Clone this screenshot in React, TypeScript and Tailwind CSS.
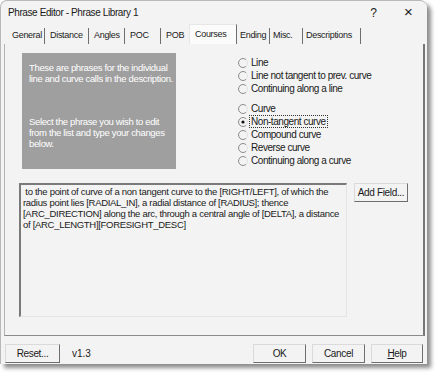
import React from "react";

const font = { fontFamily: '"Liberation Sans", Arial, sans-serif' };

function Radio({ label, checked, focus }: { label: string; checked?: boolean; focus?: boolean }) {
  return (
    <div className="flex items-center h-[13px]">
      <svg width="10" height="10" viewBox="0 0 10 10" className="shrink-0">
        <path d="M8.2 1.8 A4.5 4.5 0 1 0 8.2 8.2" fill="none" stroke="#8a8a8a" strokeWidth="1" />
        <path d="M8.2 8.2 A4.5 4.5 0 0 0 8.2 1.8" fill="none" stroke="#e2e2e2" strokeWidth="1" />
        {checked && <circle cx="5" cy="5" r="1.6" fill="#111" />}
      </svg>
      <span
        className={
          "ml-[2px] px-[1px] leading-[11px] tracking-[-0.45px] " +
          (focus ? "outline outline-1 outline-dotted outline-[#333]" : "")
        }
      >
        {label}
      </span>
    </div>
  );
}

function Btn({ children, w }: { children: React.ReactNode; w: string }) {
  return (
    <div
      className={
        "h-[19px] flex items-center justify-center tracking-[-0.35px] border border-t-[#dadada] border-l-[#dadada] border-r-[#6e6e6e] border-b-[#6e6e6e] bg-[#f3f3f3] " +
        w
      }
    >
      {children}
    </div>
  );
}

const tabs = [
  { t: "General", w: "w-[38px]", sep: true },
  { t: "Distance", w: "w-[44px]", sep: true },
  { t: "Angles", w: "w-[36px]", sep: true },
  { t: "POC", w: "w-[36px]", sep: true },
  { t: "POB", w: "w-[28px]", sep: false },
];
const tabs2 = [
  { t: "Ending", w: "w-[33px]" },
  { t: "Misc.", w: "w-[33px]" },
  { t: "Descriptions", w: "w-[58px]" },
];

export default function App() {
  return (
    <div className="w-[440px] h-[380px] bg-white text-[#1a1a1a] text-[10px]" style={font}>
      <div className="w-[427px] h-[364px] bg-[#f3f3f3] rounded-t-[7px] border-l border-t border-[#b8b8b8] shadow-[4px_4px_4px_rgba(0,0,0,0.45)] flex flex-col">
        {/* title bar */}
        <div className="h-[23px] flex items-center pl-[7px] shrink-0">
          <span className="text-[10px] tracking-[-0.4px] text-[#1a1a1a]">
            Phrase Editor - Phrase Library 1
          </span>
          <div className="ml-auto flex pr-[1px]">
            <span className="w-[35px] text-center text-[12px]">?</span>
            <span className="w-[35px] text-center text-[15px] leading-[15px] font-light">×</span>
          </div>
        </div>
        {/* tabs */}
        <div className="h-[20px] flex items-end pl-[6px] shrink-0 text-[9px] tracking-[-0.3px]">
          {tabs.map((t) => (
            <div key={t.t} className={"h-[16px] flex items-center pl-[5px] " + t.w + (t.sep ? " border-r border-[#6e6e6e]" : "")}>
              {t.t}
            </div>
          ))}
          <div className="h-[20px] w-[48px] flex items-center pl-[5px] pt-[1px] bg-[#fbfbfb] border-t border-l border-[#e6e6e6] border-r border-r-[#6e6e6e]">
            Courses
          </div>
          {tabs2.map((t) => (
            <div key={t.t} className={"h-[16px] flex items-center pl-[3px] border-r border-[#6e6e6e] " + t.w}>
              {t.t}
            </div>
          ))}
        </div>
        {/* panel */}
        <div className="ml-[3px] w-[421px] h-[292px] border-l border-[#b4b4b4] border-r-2 border-r-[#777] border-b border-b-[#8a8a8a] shrink-0 flex flex-col">
          <div className="flex pl-[17px] pt-[9px]">
            <div className="w-[154px] h-[116px] bg-[#9f9f9f] text-white text-[9.5px] px-[7px] pt-[9px] leading-[11px] tracking-[-0.35px] whitespace-nowrap">
              <div>These are phrases for the individual</div>
              <div>line and curve calls in the description.</div>
              <div className="mt-[32px]">Select the phrase you wish to edit</div>
              <div>from the list and type your changes</div>
              <div>below.</div>
            </div>
            <div className="ml-[62px] pt-[3px] flex flex-col">
              <Radio label="Line" />
              <Radio label="Line not tangent to prev. curve" />
              <Radio label="Continuing along a line" />
              <div className="h-[7px]" />
              <Radio label="Curve" />
              <Radio label="Non-tangent curve" checked focus />
              <Radio label="Compound curve" />
              <Radio label="Reverse curve" />
              <Radio label="Continuing along a curve" />
            </div>
          </div>
          <div className="flex pl-[14px] mt-[14px]">
            <div className="w-[328px] h-[134px] border-t-2 border-l-2 border-t-[#7a7a7a] border-l-[#7a7a7a] border-r border-b border-r-[#e4e4e4] border-b-[#e4e4e4] pl-[2px] pt-[1px] text-[9.5px] leading-[11px] whitespace-pre tracking-[-0.3px]">
              <div> to the point of curve of a non tangent curve to the [RIGHT/LEFT], of which the</div>
              <div>radius point lies [RADIAL_IN], a radial distance of [RADIUS]; thence</div>
              <div>[ARC_DIRECTION] along the arc, through a central angle of [DELTA], a distance</div>
              <div>of [ARC_LENGTH][FORESIGHT_DESC]</div>
            </div>
            <div className="ml-[7px]">
              <Btn w="w-[54px]">Add Field...</Btn>
            </div>
          </div>
        </div>
        {/* bottom */}
        <div className="flex items-center pl-[4px] pr-[4px] mt-[8px]">
          <Btn w="w-[55px]">Reset...</Btn>
          <span className="ml-[12px]">v1.3</span>
          <div className="ml-auto flex gap-[6px]">
            <Btn w="w-[53px]">OK</Btn>
            <Btn w="w-[53px]">Cancel</Btn>
            <Btn w="w-[52px]">
              <span>
                <span className="underline">H</span>elp
              </span>
            </Btn>
          </div>
        </div>
      </div>
    </div>
  );
}
